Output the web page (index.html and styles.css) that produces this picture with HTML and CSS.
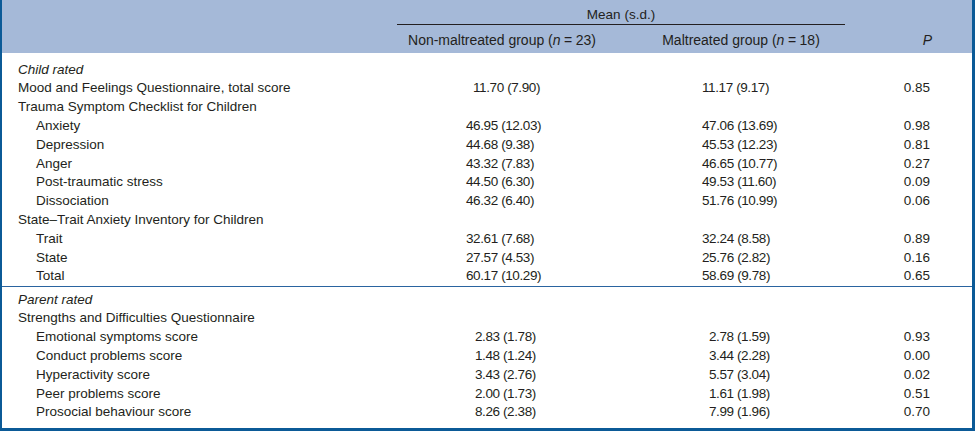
FILE: index.html
```html
<!DOCTYPE html>
<html>
<head>
<meta charset="utf-8">
<link rel="stylesheet" href="styles.css">
</head>
<body>
<div class="frame">
<table class="tbl">
<colgroup>
<col class="c-label"><col class="c-g1"><col class="c-g2"><col class="c-p">
</colgroup>
<thead>
<tr class="h1"><th></th><th colspan="2" class="mean">Mean (s.d.)</th><th></th></tr>
<tr class="h2"><th></th><th class="g1">Non-maltreated group (<i>n</i>&#8197;=&#8197;23)</th><th class="g2">Maltreated group (<i>n</i>&#8197;=&#8197;18)</th><th class="p"><i>P</i></th></tr>
</thead>
<tbody class="child">
<tr class="first"><td class="sec"><i>Child rated</i></td><td></td><td></td><td></td></tr>
<tr><td class="lab">Mood and Feelings Questionnaire, total score</td><td class="v1 shift">11.70 (7.90)</td><td class="v2">11.17 (9.17)</td><td class="vp">0.85</td></tr>
<tr><td class="lab">Trauma Symptom Checklist for Children</td><td></td><td></td><td></td></tr>
<tr><td class="sub">Anxiety</td><td class="v1">46.95 (12.03)</td><td class="v2">47.06 (13.69)</td><td class="vp">0.98</td></tr>
<tr><td class="sub">Depression</td><td class="v1">44.68 (9.38)</td><td class="v2">45.53 (12.23)</td><td class="vp">0.81</td></tr>
<tr><td class="sub">Anger</td><td class="v1">43.32 (7.83)</td><td class="v2">46.65 (10.77)</td><td class="vp">0.27</td></tr>
<tr><td class="sub">Post-traumatic stress</td><td class="v1">44.50 (6.30)</td><td class="v2">49.53 (11.60)</td><td class="vp">0.09</td></tr>
<tr><td class="sub">Dissociation</td><td class="v1">46.32 (6.40)</td><td class="v2">51.76 (10.99)</td><td class="vp">0.06</td></tr>
<tr><td class="lab">State–Trait Anxiety Inventory for Children</td><td></td><td></td><td></td></tr>
<tr><td class="sub">Trait</td><td class="v1">32.61 (7.68)</td><td class="v2">32.24 (8.58)</td><td class="vp">0.89</td></tr>
<tr><td class="sub">State</td><td class="v1">27.57 (4.53)</td><td class="v2">25.76 (2.82)</td><td class="vp">0.16</td></tr>
<tr class="last"><td class="sub">Total</td><td class="v1">60.17 (10.29)</td><td class="v2">58.69 (9.78)</td><td class="vp">0.65</td></tr>
</tbody>
<tbody class="parent">
<tr class="first"><td class="sec"><i>Parent rated</i></td><td></td><td></td><td></td></tr>
<tr><td class="lab">Strengths and Difficulties Questionnaire</td><td></td><td></td><td></td></tr>
<tr><td class="sub">Emotional symptoms score</td><td class="v1 one">2.83 (1.78)</td><td class="v2 one">2.78 (1.59)</td><td class="vp">0.93</td></tr>
<tr><td class="sub">Conduct problems score</td><td class="v1 one">1.48 (1.24)</td><td class="v2 one">3.44 (2.28)</td><td class="vp">0.00</td></tr>
<tr><td class="sub">Hyperactivity score</td><td class="v1 one">3.43 (2.76)</td><td class="v2 one">5.57 (3.04)</td><td class="vp">0.02</td></tr>
<tr><td class="sub">Peer problems score</td><td class="v1 one">2.00 (1.73)</td><td class="v2 one">1.61 (1.98)</td><td class="vp">0.51</td></tr>
<tr class="last"><td class="sub">Prosocial behaviour score</td><td class="v1 one">8.26 (2.38)</td><td class="v2 one">7.99 (1.96)</td><td class="vp">0.70</td></tr>
</tbody>
</table>
</div>
</body>
</html>
```
FILE: styles.css
```css
html, body {
  margin: 0;
  padding: 0;
  background: #ffffff;
}
.frame {
  width: 975px;
  height: 431px;
  box-sizing: border-box;
  border-left: 2px solid #0b5a97;
  border-right: 3px solid #0b5a97;
  border-bottom: 3px solid #0b5a97;
  background: #ffffff;
}
.tbl {
  width: 970px;
  border-collapse: collapse;
  table-layout: fixed;
  font-family: "Liberation Sans", Arial, sans-serif;
  font-size: 13.5px;
  color: #231f20;
}
.c-label { width: 395px; }
.c-g1 { width: 220px; }
.c-g2 { width: 228px; }
.c-p { width: 127px; }
thead th {
  background: #a5b9d8;
  font-weight: normal;
  padding: 0;
  line-height: 19px;
}
.h1 th {
  padding-top: 5px;
  height: 19px;
}
.h1 .mean {
  border-bottom: 1px solid #231f20;
  text-align: center;
}
.h2 th {
  padding-top: 6px;
  padding-bottom: 3px;
  font-size: 14px;
}
.h2 .g1 { text-align: center; padding-right: 10px; }
.h2 .g2 { text-align: center; padding-left: 20px; }
.h2 .p { text-align: right; padding-right: 40px; }
td {
  padding: 0;
  line-height: 18.8px;
  white-space: nowrap;
}
.first td { padding-top: 7.6px; }
.parent .first td { padding-top: 3.4px; }
.child .last td { border-bottom: 1px solid #2a64a0; }
.sec, .lab { padding-left: 16px; }
.sub { padding-left: 34px; }
.v1, .v2 {
  letter-spacing: -0.4px;
}
.v1 { padding-left: 69px; }
.v1.shift { padding-left: 76px; }
.v1.one { padding-left: 78px; }
.v2 { padding-left: 85px; }
.v2.one { padding-left: 92px; }
.vp { text-align: right; padding-right: 42px; }
```
